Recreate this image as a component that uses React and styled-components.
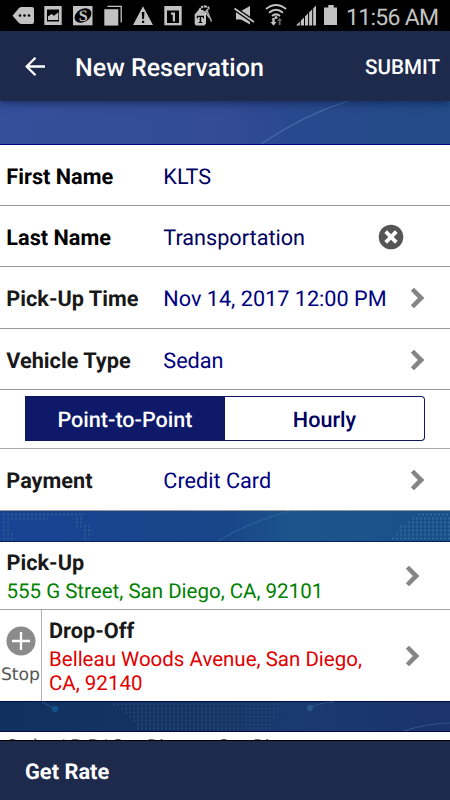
import React from "react";
import styled, { createGlobalStyle } from "styled-components";

const Global = createGlobalStyle`
  * { box-sizing: border-box; }
  body { margin: 0; background: #000; font-family: Roboto, "Liberation Sans", sans-serif; text-rendering: geometricPrecision; }
  button { text-rendering: inherit; }
`;

const Screen = styled.main`
  width: 450px; height: 800px; overflow: hidden;
  display: flex; flex-direction: column; background: #fff;
`;

const StatusBar = styled.div`
  height: 31px; flex: none; background: #000; color: #c2c2c2;
  svg { display: block; }
`;

const StatusText = styled.text`
  font-size: 23px; fill: #c4c4c4;
`;

const Header = styled.header`
  height: 70px; flex: none; background: #1e2a4c; color: #fff;
  display: flex; align-items: center; padding: 2px 10px 0 25px;
  position: relative; z-index: 1; box-shadow: 0 2px 8px rgba(10, 20, 60, 0.6);
`;

const BackIcon = styled.svg`
  width: 20px; height: 20px; margin-right: 30px; flex: none;
`;

const Title = styled.h1`
  margin: 0; font-size: 25px; font-weight: 500; flex: 1; line-height: 30px; padding-top: 4px;
`;

const Submit = styled.button`
  border: 0; background: none; padding: 2px 0 0; color: #fff; font: 500 20.6px/26px Roboto, sans-serif;
`;

const Band = styled.section`
  flex: none; height: ${(p) => p.$height}px; background: ${(p) => p.$fill};
  border-bottom: 1px solid ${(p) => p.$edge};
  svg { display: block; }
`;

const Row = styled.div`
  flex: none; height: ${(p) => p.$height}px; border-bottom: 1px solid #999;
  display: flex; align-items: center; padding: 1px 25px 0 6.3px;
  background: #fff;
`;

const Label = styled.span`
  width: 157px; flex: none; font-size: 21.7px; font-weight: 700; line-height: 26px;
  color: ${(p) => p.$color || "#191919"}; white-space: nowrap; padding-top: 4px;
`;

const Value = styled.span`
  flex: 1; font-size: 21.65px; line-height: 26px; color: ${(p) => p.$color || "#000080"};
  white-space: nowrap; padding-top: 4px;
`;

const ClearIcon = styled.svg`
  width: 26px; height: 26px; margin-right: 21.5px; flex: none;
`;

const ChevronIcon = styled.svg`
  width: 15px; height: 22px; flex: none;
`;

const SegmentRow = styled.div`
  height: 59px; flex: none; border-bottom: 1px solid #aaa;
  padding: 6px 25px 7px; display: flex;
`;

const Segment = styled.button`
  width: 200px; flex: none; font: 500 21.6px/26px Roboto, sans-serif;
  background: ${(p) => (p.$active ? "#0e1a69" : "#fff")};
  color: ${(p) => (p.$active ? "#fff" : "#000060")};
  border: 1px solid #11175c;
  border-left-width: ${(p) => (p.$active ? 1 : 0)}px;
  border-radius: ${(p) => (p.$active ? "0" : "0 4px 4px 0")};
  padding: 5px 0 0;
`;

const Pickup = styled.div`
  height: 68px; flex: none; border-bottom: 1px solid #a2a2a2;
  display: flex; align-items: center; padding: 0 30px 0 6.5px;
`;

const DropOff = styled.div`
  height: 91px; flex: none; display: flex; align-items: center; padding-right: 30px;
`;

const Place = styled.div`
  flex: 1; padding-top: 4px;
`;

const PlaceName = styled.div`
  font-size: 21.7px; font-weight: 700; line-height: 26px; color: #191919;
`;

const Address = styled.div`
  margin-top: ${(p) => p.$gap || 2}px; font-size: 20.5px; line-height: ${(p) => p.$leading || 26}px;
  color: ${(p) => p.$color}; white-space: pre;
`;

const StopButton = styled.button`
  width: 42px; height: 91px; margin-right: 7px; padding: 16px 0 0; flex: none;
  border: 0; border-right: 1px solid #b0b0b0; background: #fff;
  display: flex; flex-direction: column; align-items: center;
  font: 17.2px/20px "DejaVu Sans", sans-serif; color: #555;
  svg { display: block; flex: none; margin-bottom: 9px; }
`;

const Summary = styled.div`
  height: 8px; flex: none; overflow: hidden; padding: 3px 7px 0;
  font-size: 18px; line-height: 23px; color: #555; white-space: nowrap;
`;

const Footer = styled.footer`
  height: 60px; flex: none; border-top: 1px solid #000; background: #1e2a4c;
  display: flex; align-items: center; padding: 4px 25px 0;
  color: #fff; font-size: 21.8px; font-weight: 700;
`;

const Chevron = () => (
  <ChevronIcon viewBox="0 0 15 22">
    <path d="M0.8 3.8 L4 0.7 L14.4 11 L4 21.3 L0.8 18.2 L7.8 11 Z" fill="#858585" />
  </ChevronIcon>
);

const StatusIcons = () => (
  <StatusBar>
    <svg width="450" height="31">
      <path d="M12.5 15.8 19 8Q20 7 21.500 7H32Q34 7 34 9V22Q34 24 32 24H21.500Q20 24 19 23Z" fill="#c2c2c2" />
      <g fill="#000"><circle cx="20" cy="15.500" r="1.300" /><circle cx="24.500" cy="15.500" r="1.300" /><circle cx="29" cy="15.500" r="1.300" /></g>
      <path d="M44.300 6H61.700V25H44.300Z" fill="#c2c2c2" />
      <path d="M47 9.500H59V21.500H47Z" />
      <path d="M48 20V16.500L51.500 14L54 15.800L58.300 12.300V20Z" fill="#c2c2c2" />
      <path d="M73 6H92.500V25.300H73Z" fill="#c2c2c2" />
      <ellipse cx="83" cy="15.500" rx="9.100" ry="6.500" transform="rotate(-32 83 15.500)" />
      <text x="78.700" y="20.800" fill="#c2c2c2" fontFamily="Liberation Serif" fontWeight="700" fontSize="16">S</text>
      <path d="M104.300 9.200H118.300V25.600H104.300Z" fill="#c2c2c2" />
      <path d="M107.500 6.300H121.200V22.500" fill="none" stroke="#c2c2c2" strokeWidth="1.300" />
      <path d="M143 6.200 153 25H133Z" fill="#c2c2c2" />
      <path d="M141.800 12H144.400L144 19H142.200ZM142 20.800H144.200V23H142Z" />
      <path d="M164.300 6H181.700V25.300H164.300Z" fill="#c2c2c2" />
      <path d="M167 10.500H179V23H167Z" />
      <path d="M171 12.500H175V21.500H172.800V14.700H171Z" fill="#c2c2c2" />
      <path d="M194.700 14.500 198.500 10H203L206 13V23.500L204.500 25.500H196L194.700 24Z" fill="#c2c2c2" />
      <path d="M196.800 15.800H204V18.500H203.200L202.600 17H201.200V22H202.300V23H198.600V22H199.700V17H198.200L197.600 18.500H196.800Z" />
      <path d="M199.500 10.500Q201 6 205.500 6.500T208 10" fill="none" stroke="#c2c2c2" strokeWidth="2.200" strokeDasharray="2.500 .7" />
      <path d="M201 12.500Q206 13 208 9M206.500 9.500 211.500 21.500" fill="none" stroke="#aaa" strokeWidth="1.600" />
      <path d="M205.500 12 209 17.500" stroke="#c2c2c2" strokeWidth="1.300" />
      <path d="M236 11H241L250 6V24.500L241 19.500H236Z" fill="#c2c2c2" />
      <path d="M234.500 8.500 254 22" stroke="#000" strokeWidth="4.500" />
      <path d="M234.500 8.500 254 22" stroke="#c2c2c2" strokeWidth="1.800" />
      <path d="M266 9Q276 1 286 9M269 12.700Q276 6.700 283 12.700M272 16Q276 12.700 280 16" fill="none" stroke="#c2c2c2" strokeWidth="2" />
      <circle cx="276" cy="17.500" r="1.500" fill="#c2c2c2" />
      <path d="M272.300 18V22H270.500L273.500 25.700L276.500 22H274.700V18Z" fill="#c2c2c2" />
      <path d="M278.700 25V20.800H277L279.600 17.700L282.300 20.800H280.600V25Z" fill="#666" />
      <path d="M296 25.500 316 5.500V25.500Z" fill="#c2c2c2" />
      <path d="M300.300 18V26M304.500 12V26M308.600 9V26M312.700 5V26" stroke="#000" strokeWidth="1" />
      <path d="M324 7.500H328.300V5H333.700V7.500H337V25H324Z" fill="#c2c2c2" />
      <StatusText x="346" y="24.700" textLength="93">11:56 AM</StatusText>
    </svg>
  </StatusBar>
);

export default function App() {
  return (
    <>
      <Global />
      <Screen>
        <StatusIcons />
        <Header>
          <BackIcon viewBox="0 0 20 20">
            <path d="M20 9.500H2M10.500 .7 1.700 9.500 10.500 18.300" fill="none" stroke="#fff" strokeWidth="2.300" />
          </BackIcon>
          <Title>New Reservation</Title>
          <Submit>SUBMIT</Submit>
        </Header>
        <Band $height={44} $fill="linear-gradient(90deg, #35509a, #324b94 52%, #29498e 64%, #234c88)" $edge="#000084">
          <svg width="450" height="43"><path d="M261 43Q304 14 348 0" fill="none" stroke="#416da9" strokeWidth="1.300" /></svg>
        </Band>
        <Row $height={61}><Label $color="#000">First Name</Label><Value $color="#000060">KLTS</Value></Row>
        <Row $height={61}>
          <Label $color="#000">Last Name</Label><Value $color="#000060">Transportation</Value>
          <ClearIcon viewBox="0 0 26 26">
            <circle cx="13" cy="13" r="12.300" fill="#555" />
            <path d="M7.700 7.700 18.300 18.300M18.300 7.700 7.700 18.300" stroke="#fff" strokeWidth="3.800" />
          </ClearIcon>
        </Row>
        <Row $height={62}><Label>Pick-Up Time</Label><Value>Nov 14, 2017 12:00 PM</Value><Chevron /></Row>
        <Row $height={61}><Label>Vehicle Type</Label><Value>Sedan</Value><Chevron /></Row>
        <SegmentRow><Segment $active>Point-to-Point</Segment><Segment>Hourly</Segment></SegmentRow>
        <Row $height={62}><Label>Payment</Label><Value>Credit Card</Value><Chevron /></Row>
        <Band $height={31} $fill="linear-gradient(90deg, #194292, #194589 50%, #1b558b 65%, #18518a)" $edge="#06215c">
          <svg width="450" height="30">
            <path d="M3 3.500H84M3 7.500H48M3 11.500H11M3 15.500H11M3 19.500H11M3 23.500H15M3 27.500H15M76 7.500H84M76 11.500H84M76 15.500H92M84 19.500H93M84 23.500H93M84 27.500H89" stroke="#2a5997" strokeWidth="2" strokeDasharray="2 2" />
            <path d="M218 30Q246 12 290 0" fill="none" stroke="#2c6498" />
            <path d="M418 3.500H450M412 7.500H450M408 11.500H450M400 15.500H450M400 19.500H450M396 23.500H450M392 27.500H450" stroke="#2e6799" strokeWidth="2" strokeDasharray="2 2" />
          </svg>
        </Band>
        <Pickup>
          <Place><PlaceName>Pick-Up</PlaceName><Address $color="#008000">555 G Street, San Diego, CA, 92101</Address></Place>
          <Chevron />
        </Pickup>
        <DropOff>
          <StopButton>
            <svg width="30" height="30"><circle cx="15" cy="15" r="14.500" fill="#8b8b8b" /><path d="M6 15H24M15 6V24" stroke="#fff" strokeWidth="2.300" /></svg>
            Stop
          </StopButton>
          <Place><PlaceName>Drop-Off</PlaceName><Address $color="#e00000" $gap={3} $leading={24}>{"Belleau Woods Avenue, San Diego,\nCA, 92140"}</Address></Place>
          <Chevron />
        </DropOff>
        <Band $height={31} $fill="linear-gradient(90deg, #10315f, #163465 48%, #193a70 65%, #1b346b)" $edge="#000b42">
          <svg width="450" height="30">
            <path d="M0 .5H450" stroke="#000b42" />
            <path d="M42 1 55 8" stroke="#23548c" /><circle cx="55" cy="8" r="3" fill="#125491" />
            <path d="M113 3.500H282M121 7.500H282M125 11.500H282M129 15.500H278M133 19.500H278M137 23.500H274M137 27.500H274" stroke="#204475" strokeWidth="2" strokeDasharray="2 2" />
            <path d="M310 7Q321 1 334 1M404 30Q428 22 450 22" fill="none" stroke="#2b568d" strokeWidth="1.200" /><circle cx="310" cy="7" r="3" fill="#2b568d" />
          </svg>
        </Band>
        <Summary>Sedan | PtP | San Diego to San Diego</Summary>
        <Footer>Get Rate</Footer>
      </Screen>
    </>
  );
}
